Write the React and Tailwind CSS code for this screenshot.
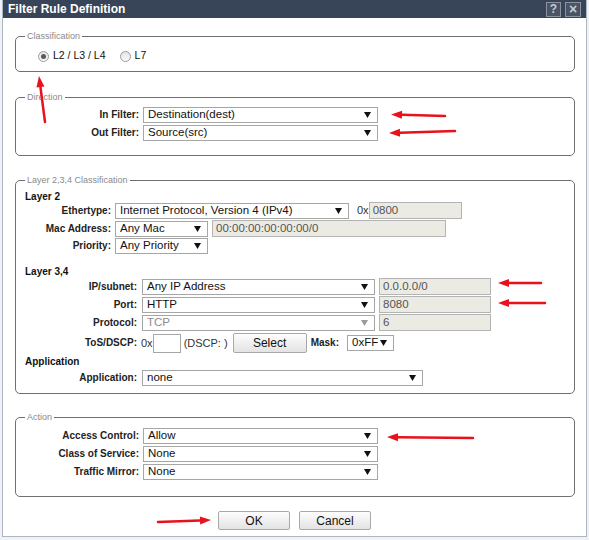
import React from "react";
import clsx from "clsx";

const Tri = ({ grey }) => (
  <svg width="7" height="6" viewBox="0 0 7 6" className="shrink-0">
    <path d="M0 0h7L3.5 6z" fill={grey ? "#9a9a9a" : "#111"} />
  </svg>
);

const Select = ({ className, value, disabled }) => (
  <div
    className={clsx(
      "flex h-[16px] shrink-0 items-center justify-between border border-[#a6a6a6] bg-white pl-[4px] pr-[6px] text-[11.5px] leading-none",
      disabled ? "text-[#8c8c8c]" : "text-[#111]",
      className
    )}
  >
    <span className="whitespace-nowrap">{value}</span>
    <Tri grey={disabled} />
  </div>
);

const Field = ({ className, value }) => (
  <div
    className={clsx(
      "flex shrink-0 items-center border border-[#b4b4b4] bg-[#ebebe4] pl-[3px] text-[11.5px] leading-none text-[#555]",
      className
    )}
  >
    {value}
  </div>
);

const Label = ({ className, children }) => (
  <div className={clsx("shrink-0 text-right text-[10px] font-bold leading-none text-[#222]", className)}>
    {children}
  </div>
);

const Box = ({ legend, className, children }) => (
  <fieldset className={clsx("ml-[12px] w-[560px] rounded-[5px] border border-[#6f6f6f]", className)}>
    <legend className="ml-[9px] px-[2px] text-[9px] leading-[11px] text-[#8a8a8a]">{legend}</legend>
    {children}
  </fieldset>
);

const Radio = ({ checked }) => (
  <span className="flex h-[11px] w-[11px] items-center justify-center rounded-full border border-[#9c9c9c] bg-gradient-to-b from-[#e4e4e4] to-[#fafafa]">
    {checked && <span className="h-[5px] w-[5px] rounded-full bg-[#5a5a5a]" />}
  </span>
);

const Btn = ({ className, children }) => (
  <div
    className={clsx(
      "flex items-center justify-center rounded-[2px] border border-[#a9a9a9] bg-gradient-to-b from-[#fdfdfd] to-[#e3e3e3] text-[12px] text-[#111]",
      className
    )}
  >
    {children}
  </div>
);

// red annotation arrows drawn over the dialog
const arrows = [
  { tip: [39, 76], tail: [45, 122] },
  { tip: [391, 114.5], tail: [445, 116] },
  { tip: [389, 133], tail: [455, 131] },
  { tip: [498, 283], tail: [541, 283] },
  { tip: [498, 303], tail: [545, 303] },
  { tip: [387, 437], tail: [473, 438] },
  { tip: [211, 520], tail: [158, 522] },
];

const Arrow = ({ tip, tail }) => {
  const [tx, ty] = tip;
  const [sx, sy] = tail;
  const dx = tx - sx;
  const dy = ty - sy;
  const len = Math.hypot(dx, dy);
  const ux = dx / len;
  const uy = dy / len;
  const bx = tx - ux * 11;
  const by = ty - uy * 11;
  const px = -uy * 4;
  const py = ux * 4;
  return (
    <g>
      <line x1={sx} y1={sy} x2={bx} y2={by} stroke="#e8121c" strokeWidth="2.5" strokeLinecap="round" />
      <path d={`M${tx} ${ty}L${bx + px} ${by + py}L${bx - px} ${by - py}Z`} fill="#e8121c" />
    </g>
  );
};

export default function App() {
  return (
    <div className="relative h-[540px] w-[589px] overflow-hidden bg-[#eef1f5] font-['Liberation_Sans',Arial,sans-serif]">
      <div className="ml-[2px] flex h-[537px] w-[585px] flex-col border border-t-0 border-[#aeb6c2] bg-white">
        {/* Title bar */}
        <div className="flex h-[18px] shrink-0 items-center justify-between bg-[#384457] pl-[5px] pr-[5px]">
          <span className="text-[12px] font-bold leading-none text-white">Filter Rule Definition</span>
          <div className="flex items-center gap-[4px]">
            <div className="flex h-[15px] w-[15px] items-center justify-center border border-[#8a93a0] bg-[#4a5466] text-[12px] font-bold leading-none text-[#c4c9d0]">
              ?
            </div>
            <div className="flex h-[15px] w-[16px] items-center justify-center border border-[#8a93a0] bg-[#4a5466] text-[14px] font-bold leading-none text-[#c4c9d0]">
              ×
            </div>
          </div>
        </div>

        {/* Classification */}
        <Box legend="Classification" className="mt-[13px] pb-[7px] pt-[6px]">
          <div className="flex h-[16px] items-center pl-[22px] text-[10.5px] text-[#111]">
            <Radio checked />
            <span className="ml-[4px]">L2 / L3 / L4</span>
            <span className="ml-[14px]">
              <Radio />
            </span>
            <span className="ml-[4px]">L7</span>
          </div>
        </Box>

        {/* Direction */}
        <Box legend="Direction" className="mt-[20px] pb-[14px] pt-[4px]">
          <div className="flex flex-col gap-[2px]">
            <div className="flex h-[16px] items-center gap-[4px]">
              <Label className="w-[123px]">In Filter:</Label>
              <Select className="w-[235px]" value="Destination(dest)" />
            </div>
            <div className="flex h-[16px] items-center gap-[4px]">
              <Label className="w-[123px]">Out Filter:</Label>
              <Select className="w-[235px]" value="Source(src)" />
            </div>
          </div>
        </Box>

        {/* Layer 2,3,4 */}
        <Box legend="Layer 2,3,4 Classification" className="mt-[19px] pb-[7px] pt-[5px]">
          <div className="h-[11px] pl-[9px] text-[10px] font-bold leading-[11px] text-[#111]">Layer 2</div>
          <div className="flex h-[17px] items-center">
            <Label className="w-[95px]">Ethertype:</Label>
            <Select className="ml-[4px] w-[234px]" value="Internet Protocol, Version 4 (IPv4)" />
            <span className="ml-[8px] text-[11px] text-[#333]">0x</span>
            <Field className="h-[17px] w-[93px]" value="0800" />
          </div>
          <div className="mt-[1px] flex h-[17px] items-center">
            <Label className="w-[95px]">Mac Address:</Label>
            <Select className="ml-[4px] w-[93px]" value="Any Mac" />
            <Field className="ml-[4px] h-[17px] w-[234px]" value="00:00:00:00:00:00/0" />
          </div>
          <div className="mt-[1px] flex h-[16px] items-center">
            <Label className="w-[95px]">Priority:</Label>
            <Select className="ml-[4px] w-[93px]" value="Any Priority" />
          </div>

          <div className="mt-[12px] h-[11px] pl-[9px] text-[10px] font-bold leading-[11px] text-[#111]">Layer 3,4</div>
          <div className="mt-[1px] flex flex-col gap-[1px]">
            <div className="flex h-[17px] items-center">
              <Label className="w-[121px]">IP/subnet:</Label>
              <Select className="ml-[5px] w-[233px]" value="Any IP Address" />
              <Field className="ml-[4px] h-[17px] w-[112px]" value="0.0.0.0/0" />
            </div>
            <div className="flex h-[17px] items-center">
              <Label className="w-[121px]">Port:</Label>
              <Select className="ml-[5px] w-[233px]" value="HTTP" />
              <Field className="ml-[4px] h-[17px] w-[112px]" value="8080" />
            </div>
            <div className="flex h-[17px] items-center">
              <Label className="w-[121px]">Protocol:</Label>
              <Select className="ml-[5px] w-[233px]" value="TCP" disabled />
              <Field className="ml-[4px] h-[17px] w-[112px]" value="6" />
            </div>
          </div>
          <div className="mt-[2px] flex h-[20px] items-center">
            <Label className="w-[121px]">ToS/DSCP:</Label>
            <span className="ml-[4px] text-[11px] text-[#333]">0x</span>
            <div className="h-[19px] w-[28px] border border-[#a6a6a6] bg-white" />
            <span className="ml-[3px] text-[11px] text-[#333]">(DSCP: )</span>
            <Btn className="ml-[5px] h-[20px] w-[74px]">Select</Btn>
            <Label className="ml-[4px]">Mask:</Label>
            <Select className="ml-[8px] w-[47px] pl-[3px] pr-[5px] text-[10.5px]" value="0xFF" />
          </div>

          <div className="mt-[3px] h-[11px] pl-[9px] text-[10px] font-bold leading-[11px] text-[#111]">Application</div>
          <div className="mt-[3px] flex h-[16px] items-center">
            <Label className="w-[121px]">Application:</Label>
            <Select className="ml-[5px] w-[281px]" value="none" />
          </div>
        </Box>

        {/* Action */}
        <Box legend="Action" className="mt-[18px] pb-[16px] pt-[5px]">
          <div className="flex flex-col gap-[2px]">
            <div className="flex h-[16px] items-center gap-[4px]">
              <Label className="w-[123px]">Access Control:</Label>
              <Select className="w-[235px]" value="Allow" />
            </div>
            <div className="flex h-[16px] items-center gap-[4px]">
              <Label className="w-[123px]">Class of Service:</Label>
              <Select className="w-[235px]" value="None" />
            </div>
            <div className="flex h-[16px] items-center gap-[4px]">
              <Label className="w-[123px]">Traffic Mirror:</Label>
              <Select className="w-[235px]" value="None" />
            </div>
          </div>
        </Box>

        {/* Buttons */}
        <div className="mt-[14px] flex justify-center gap-[9px]">
          <Btn className="h-[19px] w-[72px]">OK</Btn>
          <Btn className="h-[19px] w-[72px]">Cancel</Btn>
        </div>
      </div>

      <svg className="pointer-events-none absolute left-0 top-0" width="589" height="540">
        {arrows.map((a, i) => (
          <Arrow key={i} {...a} />
        ))}
      </svg>
    </div>
  );
}
